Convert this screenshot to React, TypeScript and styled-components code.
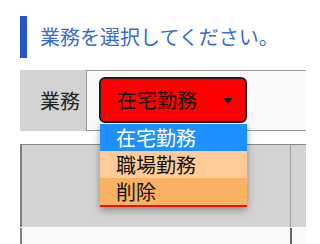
import React from "react";
import styled, { createGlobalStyle } from "styled-components";

const Global = createGlobalStyle`
  html, body { margin: 0; padding: 0; background: #ffffff; overflow: hidden; }
  body { font-family: "Noto Sans CJK JP", "Noto Sans", sans-serif; }
`;

const Page = styled.div`
  width: 306px;
  height: 244px;
  overflow: hidden;
  position: relative;
`;

const Heading = styled.h1`
  margin: 16px 0 0 20px;
  height: 42px;
  border-left: 7px solid #2255cc;
  padding-left: 13px;
  display: flex;
  align-items: center;
  font-size: 20px;
  font-weight: 400;
  line-height: 1;
  color: #3a6bd2;
  white-space: nowrap;
`;

const FormRow = styled.div`
  margin: 12px 0 0 20px;
  display: flex;
  width: 320px;
  height: 61px;
`;

const LabelCell = styled.div`
  width: 66px;
  box-sizing: border-box;
  background: #d3d3d3;
  padding-left: 20px;
  display: flex;
  align-items: center;
  font-size: 20px;
  line-height: 1;
  color: #222;
`;

const FieldCell = styled.div`
  flex: 1;
  box-sizing: border-box;
  background: #f9f9f9;
  border: 1px solid #9a9a9a;
  border-right: none;
  padding: 6px 0 0 12px;
  position: relative;
`;

const SelectBox = styled.div`
  width: 148px;
  height: 46px;
  box-sizing: border-box;
  background: #ff0000;
  border: 2px solid #1e1e1e;
  border-radius: 6px;
  display: flex;
  align-items: center;
  padding-left: 16px;
  font-size: 20px;
  line-height: 1;
  color: #111;
  position: relative;
`;

const Arrow = styled.span`
  position: absolute;
  right: 12px;
  top: 19px;
  width: 0;
  height: 0;
  border-left: 5.5px solid transparent;
  border-right: 5.5px solid transparent;
  border-top: 6px solid #222;
`;

const Menu = styled.ul`
  position: absolute;
  left: 13px;
  top: 53px;
  width: 147px;
  margin: 0;
  padding: 0;
  list-style: none;
  border-bottom: 2px solid #ee1111;
  box-shadow: 0 3px 8px rgba(0, 0, 0, 0.35);
  z-index: 2;
`;

const Option = styled.li<{ $bg: string; $fg: string }>`
  height: 27px;
  box-sizing: border-box;
  padding-left: 16px;
  display: flex;
  align-items: center;
  font-size: 20px;
  line-height: 1;
  background: ${(p) => p.$bg};
  color: ${(p) => p.$fg};
`;

const Table = styled.div`
  margin: 13px 0 0 20px;
  width: 320px;
  display: grid;
  grid-template-columns: 270px 1fr;
  row-gap: 1px;
`;

const HeadCell = styled.div<{ $first?: boolean }>`
  height: 83px;
  background: #d3d3d3;
  border-top: 1px solid #8a8a8a;
  border-left: ${(p) => (p.$first ? "2px solid #808080" : "1px solid #a0a0a0")};
  box-sizing: border-box;
`;

const BodyCell = styled.div<{ $first?: boolean }>`
  height: 20px;
  background: #f9f9f9;
  border-left: ${(p) => (p.$first ? "2px solid #808080" : "2px solid #666666")};
  box-sizing: border-box;
`;

const options = [
  { label: "在宅勤務", bg: "#1e90ff", fg: "#ffffff" },
  { label: "職場勤務", bg: "#ffcc99", fg: "#111111" },
  { label: "削除", bg: "#f9b262", fg: "#111111" },
];

export default function App() {
  return (
    <Page>
      <Global />
      <Heading>業務を選択してください。</Heading>
      <FormRow>
        <LabelCell>業務</LabelCell>
        <FieldCell>
          <SelectBox>
            在宅勤務
            <Arrow />
          </SelectBox>
          <Menu>
            {options.map((o) => (
              <Option key={o.label} $bg={o.bg} $fg={o.fg}>
                {o.label}
              </Option>
            ))}
          </Menu>
        </FieldCell>
      </FormRow>
      <Table>
        <HeadCell $first />
        <HeadCell />
        <BodyCell $first />
        <BodyCell />
      </Table>
    </Page>
  );
}
